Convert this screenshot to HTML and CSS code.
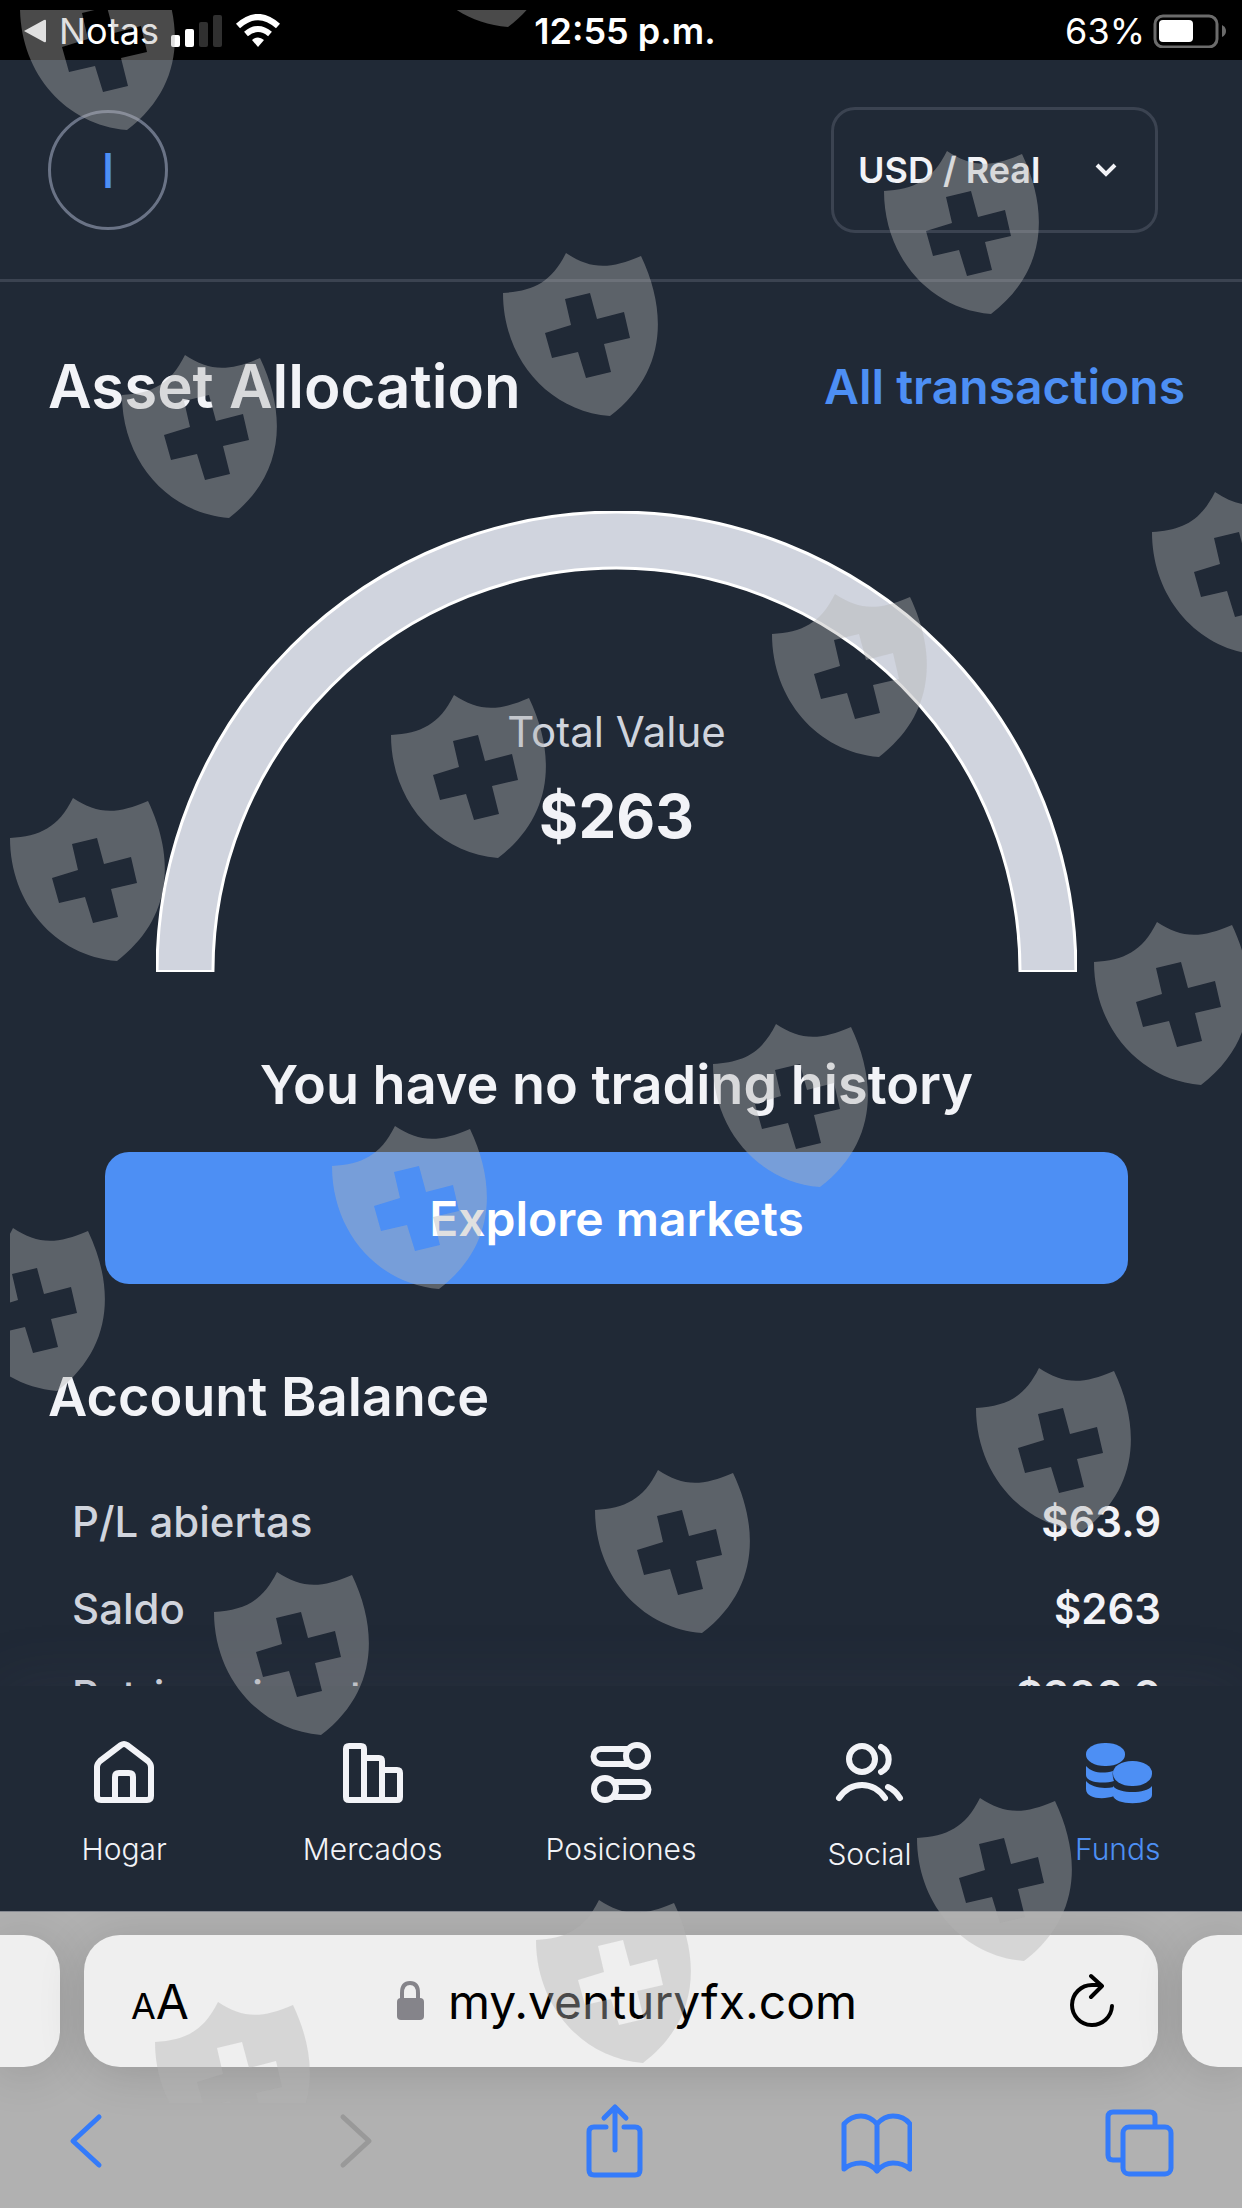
FILE: index.html
```html
<!DOCTYPE html>
<html lang="es">
<head>
    <meta charset="UTF-8">
    <meta name="viewport" content="width=device-width, initial-scale=1.0">
    <title>Funds</title>
    <link rel="stylesheet" href="styles.css">
</head>
<body>

    <!-- Status Bar -->
    <div class="status-bar">
        <div class="status-left">
            <svg class="back-app" viewBox="0 0 24 24"><path d="M1 12L21 1q2-1 2 1v20q0 2-2 1z" fill="#fff"/></svg>
            <span>Notas</span>
            <svg class="signal" viewBox="0 0 52 34">
                <g fill="#fff">
                    <rect x="0" y="21" width="9" height="12" rx="2"/>
                    <rect x="14" y="15" width="9" height="18" rx="2"/>
                </g>
                <g fill="#303030">
                    <rect x="28" y="8" width="9" height="25" rx="2"/>
                    <rect x="42" y="1" width="9" height="32" rx="2"/>
                </g>
            </svg>
            <svg class="wifi" viewBox="0 0 46 34">
                <path d="M23 33l-6-7q6-5 12 0z" fill="#fff"/>
                <path d="M11 20q12-10 24 0M3 12q20-18 40 0" fill="none" stroke="#fff" stroke-width="6"/>
            </svg>
        </div>
        <span class="time">12:55 p.m.</span>
        <div class="status-right">
            <span>63%</span>
            <svg class="battery" viewBox="0 0 74 34">
                <rect x="2" y="2" width="62" height="31" rx="8" fill="none" stroke="#6b6b6b" stroke-width="3"/>
                <rect x="6" y="6" width="34" height="22" rx="4" fill="#fff"/>
                <path d="M69 11q4 2 4 6t-4 6z" fill="#6b6b6b"/>
            </svg>
        </div>
    </div>

    <!-- Header -->
    <header class="header">
        <button class="avatar" aria-label="Perfil">I</button>
        <div class="account">
            <select class="account-select" aria-label="Cuenta">
                <option>USD / Real</option>
            </select>
            <svg class="chevron" viewBox="0 0 24 16"><path d="M3 3l9 9 9-9" fill="none" stroke="#f2f3f7" stroke-width="4"/></svg>
        </div>
    </header>

    <!-- Content -->
    <main class="content">
        <div class="title-row">
            <h1>Asset Allocation</h1>
            <a class="link" href="#">All transactions</a>
        </div>

        <div class="chart">
            <svg class="gauge" viewBox="0 0 922 462">
                <path d="M1 461A460 460 0 0 1 921 461H865A404 404 0 0 0 57 461Z" fill="#d0d4de" stroke="#fff" stroke-width="3"/>
            </svg>
            <div class="total">
                <div class="total-label">Total Value</div>
                <div class="total-value">$263</div>
            </div>
        </div>

        <h2 class="empty">You have no trading history</h2>
        <button class="explore">Explore markets</button>

        <h2>Account Balance</h2>
        <table class="balance">
            <tr><th scope="row">P/L abiertas</th><td>$63.9</td></tr>
            <tr><th scope="row">Saldo</th><td>$263</td></tr>
            <tr><th scope="row">Patrimonio neto</th><td>$326.9</td></tr>
        </table>
    </main>

    <!-- Bottom Navigation -->
    <nav class="tabs">
        <a class="tab" href="#">
            <svg class="tab-icon" viewBox="0 0 72 64">
                <path d="M9 27q0-3 3-6L33 5q3-2 6 0l21 16q3 3 3 6v29q0 4-4 4H13q-4 0-4-4z"/>
                <path d="M27 60V37q0-4 4-4h10q4 0 4 4v23"/>
            </svg>
            <span>Hogar</span>
        </a>
        <a class="tab" href="#">
            <svg class="tab-icon" viewBox="0 0 72 64">
                <path d="M9 9q0-3 3-3h12q3 0 3 3v51H12q-3 0-3-3zM27 18h15q3 0 3 3v39H27M45 30h15q3 0 3 3v24q0 3-3 3H45"/>
            </svg>
            <span>Mercados</span>
        </a>
        <a class="tab" href="#">
            <svg class="tab-icon" viewBox="0 0 72 64">
                <circle cx="52" cy="16" r="11"/>
                <path d="M42 9H16a7 7 0 0 0 0 15h26M30 42h26a7 7 0 0 1 0 15H30"/>
                <circle cx="20" cy="49" r="11"/>
            </svg>
            <span>Posiciones</span>
        </a>
        <a class="tab" href="#">
            <svg class="tab-icon" viewBox="0 0 72 69">
                <circle cx="29" cy="19" r="13"/>
                <path d="M48 7a14 14 0 0 1 0 25M6 58q9-13 23-13t23 13M55 47q7 3 12 11"/>
            </svg>
            <span>Social</span>
        </a>
        <a class="tab active" href="#">
            <svg class="tab-icon tab-icon-solid" viewBox="0 0 72 64">
                <rect x="4" y="3" width="39" height="23" rx="19" ry="11"/>
                <path d="M4 26c6 7 17 8 27 5q-1 5 1 10c-10 3-28 2-28-6zM4 41c6 7 18 8 28 6v9c-10 4-28 3-28-7z"/>
                <rect x="31" y="21" width="39" height="25" rx="19" ry="12"/>
                <path d="M31 46c6 8 33 8 39 0v9c0 11-39 11-39 0z"/>
            </svg>
            <span>Funds</span>
        </a>
    </nav>

    <!-- Browser Bar -->
    <footer class="browser">
        <div class="address-row">
            <div class="side-card side-left"></div>
            <div class="address">
                <button class="text-size" aria-label="Tamaño del texto"><span class="small-a">A</span>A</button>
                <div class="url">
                    <svg class="lock" viewBox="0 0 27 40">
                        <path d="M5 20V12q0-10 8-10t8 10v8" fill="none" stroke="#85848a" stroke-width="4"/>
                        <rect x="0" y="17" width="27" height="22" rx="4" fill="#85848a"/>
                    </svg>
                    <span>my.venturyfx.com</span>
                </div>
                <button class="reload" aria-label="Recargar">
                    <svg viewBox="0 0 46 56"><path d="M42 33a20 20 0 1 1-20-21h9M21 3l11 10-11 11" fill="none" stroke="#000" stroke-width="4" stroke-linecap="round" stroke-linejoin="round"/></svg>
                </button>
            </div>
            <div class="side-card side-right"></div>
        </div>
        <div class="toolbar">
            <button aria-label="Atrás"><svg viewBox="0 0 72 76"><path d="M49 15L23 39l26 24"/></svg></button>
            <button aria-label="Adelante" disabled><svg viewBox="0 0 72 76"><path d="M30 15l26 24-26 24"/></svg></button>
            <button aria-label="Compartir"><svg viewBox="0 0 72 76"><path d="M29 25H17q-5 0-5 5v38q0 5 5 5h41q5 0 5-5V30q0-5-5-5H47M38 48V5M27 16L38 5l11 11"/></svg></button>
            <button aria-label="Marcadores"><svg viewBox="0 0 72 76"><path d="M37 22q-7-8-16-8-10 0-17 8v45q7-6 17-6 9 0 16 8 7-8 16-8 10 0 17 6V22q-6-8-17-8-9 0-16 8zM37 22v47"/></svg></button>
            <button aria-label="Pestañas"><svg viewBox="0 0 72 76"><path d="M18 58H10q-5 0-5-5V15q0-5 5-5h37q5 0 5 5v9"/><rect x="20" y="25" width="48" height="47" rx="6"/></svg></button>
        </div>
    </footer>

    <!-- Shield Pattern -->
    <svg class="shields" viewBox="0 0 1242 2208" aria-hidden="true">
        <defs>
            <path id="shield" fill-rule="evenodd" d="M0 40C30 38 48 30 63 0C87 16 106 17 138 3C165 60 163 120 107 163C45 158 0 105 0 40ZM62 46L87 40L94 66L121 59L127 85L101 91L108 119L83 125L75 99L49 105L42 80L68 72Z"/>
            <clipPath id="area"><rect x="10" y="10" width="1232" height="2093"/></clipPath>
        </defs>
        <g clip-path="url(#area)" fill="#b4b4b4" fill-opacity="0.41">
            <use href="#shield" x="20" y="-33"/>
            <use href="#shield" x="401" y="-136"/>
            <use href="#shield" x="884" y="151"/>
            <use href="#shield" x="503" y="253"/>
            <use href="#shield" x="122" y="355"/>
            <use href="#shield" x="1152" y="492"/>
            <use href="#shield" x="772" y="594"/>
            <use href="#shield" x="391" y="695"/>
            <use href="#shield" x="10" y="798"/>
            <use href="#shield" x="1094" y="922"/>
            <use href="#shield" x="713" y="1024"/>
            <use href="#shield" x="332" y="1126"/>
            <use href="#shield" x="-50" y="1228"/>
            <use href="#shield" x="976" y="1368"/>
            <use href="#shield" x="595" y="1470"/>
            <use href="#shield" x="214" y="1572"/>
            <use href="#shield" x="917" y="1798"/>
            <use href="#shield" x="536" y="1900"/>
            <use href="#shield" x="155" y="2002"/>
        </g>
    </svg>

</body>
</html>
```

FILE: styles.css
```css
* {
    box-sizing: border-box;
}

body {
    position: relative;
    display: flex;
    flex-direction: column;
    height: 100vh;
    margin: 0;
    overflow: hidden;
    font-family: Inter, "Liberation Sans", sans-serif;
    color: #f2f3f7;
    background-color: #202936;
}

svg {
    display: block;
    flex: none;
}

button {
    padding: 0;
    border: none;
    background: none;
    font-family: inherit;
    cursor: pointer;
}

a {
    text-decoration: none;
}

h1, h2 {
    margin: 0;
    font-weight: 600;
}

h1 {
    font-size: 60px;
    line-height: 72px;
}

h2 {
    font-size: 54px;
    line-height: 66px;
}

/* Status bar */
.status-bar {
    display: grid;
    grid-template-columns: 1fr auto 1fr;
    align-items: center;
    height: 60px;
    padding: 2px 15px 0 23px;
    font-size: 36px;
    color: #fff;
    background-color: #000;
}

.status-left,
.status-right {
    display: flex;
    align-items: center;
    gap: 12px;
}

.status-right {
    justify-content: flex-end;
    gap: 8px;
}

.back-app {
    width: 24px;
}

.signal {
    width: 52px;
}

.wifi {
    width: 46px;
}

.battery {
    width: 74px;
}

.time {
    font-weight: 600;
}

/* Header */
.header {
    display: flex;
    align-items: center;
    justify-content: space-between;
    padding: 47px 84px 46px 48px;
    border-bottom: 3px solid #3b4351;
}

.avatar {
    width: 120px;
    height: 120px;
    border: 3px solid #6a7386;
    border-radius: 50%;
    font-size: 48px;
    font-weight: 500;
    color: #4d8ff4;
}

.account {
    display: grid;
    align-items: center;
    width: 327px;
}

.account-select,
.chevron {
    grid-area: 1 / 1;
}

.account-select {
    width: 100%;
    height: 126px;
    padding: 0 24px;
    border: 3px solid #3b4351;
    border-radius: 24px;
    appearance: none;
    font-family: inherit;
    font-size: 36px;
    font-weight: 600;
    color: #f2f3f7;
    background: none;
}

.chevron {
    justify-self: end;
    width: 24px;
    margin-right: 40px;
    pointer-events: none;
}

/* Content */
.content {
    flex: 1;
    min-height: 0;
    overflow: hidden;
    padding: 68px 57px 0 48px;
}

.title-row {
    display: flex;
    align-items: center;
    justify-content: space-between;
}

.link {
    font-size: 48px;
    font-weight: 600;
    color: #4d8ff4;
}

.chart {
    display: grid;
    justify-items: center;
    margin: 89px 0 80px;
}

.gauge,
.total {
    grid-area: 1 / 1;
}

.gauge {
    width: 81%;
}

.total {
    align-self: center;
    padding-top: 88px;
    text-align: center;
}

.total-label {
    font-size: 42px;
    line-height: 60px;
    color: #d0d4dd;
}

.total-value {
    font-size: 60px;
    font-weight: 700;
    line-height: 108px;
}

.empty {
    text-align: center;
}

.explore {
    display: block;
    width: 90%;
    height: 132px;
    margin: 34px auto 80px;
    border-radius: 24px;
    font-size: 48px;
    font-weight: 600;
    color: #fff;
    background-color: #4d8ff4;
}

.balance {
    width: 100%;
    margin-top: 48px;
    padding: 0 24px;
    border-spacing: 0;
    font-size: 42px;
    line-height: 87px;
}

.balance th,
.balance td {
    padding: 0;
}

.balance th {
    font-weight: 500;
    text-align: left;
    color: #d0d4dd;
}

.balance td {
    font-weight: 600;
    text-align: right;
}

/* Bottom navigation */
.tabs {
    display: grid;
    grid-template-columns: repeat(5, 1fr);
    height: 225px;
    padding-top: 54px;
    background-color: #202936;
    box-shadow: 0 0 60px rgba(90, 90, 110, 0.15);
}

.tab {
    display: flex;
    flex-direction: column;
    align-items: center;
    gap: 26px;
    font-size: 30px;
    font-weight: 300;
    line-height: 38px;
    color: #f2f3f7;
}

.tab-icon {
    width: 72px;
    fill: none;
    stroke: currentColor;
    stroke-width: 6;
    stroke-linecap: round;
    stroke-linejoin: round;
}

.tab-icon-solid {
    fill: currentColor;
    stroke: none;
}

.active {
    color: #4d8ff4;
}

/* Browser bar */
.browser {
    position: relative;
    height: 297px;
    overflow: hidden;
    border-top: 1px solid #858890;
    background-color: #b1b1b1;
}

.address-row {
    display: flex;
    gap: 24px;
    height: 132px;
    margin-top: 23px;
}

.side-card,
.address {
    background-color: #efefef;
    box-shadow: 0 6px 48px rgba(0, 0, 0, 0.14);
}

.side-card {
    width: 60px;
}

.side-left {
    border-radius: 0 36px 36px 0;
}

.side-right {
    border-radius: 36px 0 0 36px;
}

.address {
    display: grid;
    flex: 1;
    grid-template-columns: 60px 1fr 46px;
    align-items: center;
    padding: 0 42px 0 46px;
    border-radius: 36px;
    color: #000;
}

.text-size {
    font-size: 48px;
    white-space: nowrap;
    color: #000;
}

.small-a {
    font-size: 36px;
}

.url {
    display: flex;
    align-items: center;
    justify-content: center;
    gap: 24px;
    padding-right: 6px;
    font-size: 48px;
}

.lock {
    width: 27px;
}

.toolbar {
    display: flex;
    justify-content: space-between;
    padding: 35px 67px 0 50px;
}

.toolbar button {
    width: 72px;
}

.toolbar svg {
    fill: none;
    stroke: #347bfa;
    stroke-width: 5;
    stroke-linecap: round;
    stroke-linejoin: round;
}

.toolbar button:disabled svg {
    stroke: #999;
}

/* Shield pattern drawn over the whole screen */
.shields {
    position: absolute;
    top: 0;
    left: 0;
    width: 100%;
    pointer-events: none;
}
```
